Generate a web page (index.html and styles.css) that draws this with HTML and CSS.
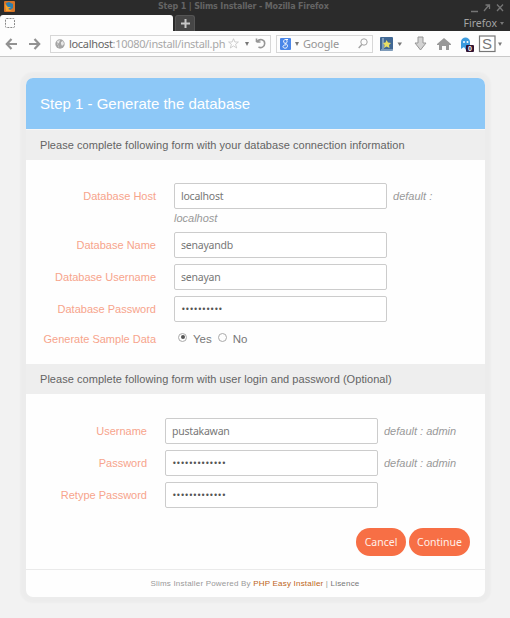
FILE: index.html
```html
<!DOCTYPE html>
<html lang="en">
<head>
<meta charset="utf-8">
<title>Step 1 | Slims Installer</title>
<link rel="stylesheet" href="styles.css">
</head>
<body>
<header class="browser">
  <div class="titlebar">
    <svg class="fox" width="11" height="11" viewBox="0 0 11 11"><rect width="11" height="11" rx="1" fill="#d87528"/><path d="M2 2L5 1L9 3V7L6 9L3 7Z" fill="#2d7fae"/><path d="M1 3L4 6L7 6L4 8L8 10H2Z" fill="#f7a52c"/></svg>
    <span class="window-title">Step 1 | Slims Installer - Mozilla Firefox</span>
    <svg class="controls" width="35" height="10" viewBox="0 0 35 10" fill="none" stroke="#757575" stroke-width="1.3"><path d="M1 8.500H8M14 8L19 2M15.500 2H19.500V6M27 1.500L33 8M33 1.500L27 8"/></svg>
  </div>
  <div class="tabs">
    <div class="tab"><svg width="10" height="10" viewBox="0 0 10 10"><rect x=".5" y=".5" width="9" height="9" rx="1" fill="none" stroke="#888" stroke-dasharray="2 1"/></svg></div>
    <div class="new-tab"><svg width="9" height="9" viewBox="0 0 9 9"><path d="M4.500 0V9M0 4.500H9" stroke="#c8c8c8" stroke-width="2"/></svg></div>
    <span class="menu">Firefox<i class="caret"></i></span>
  </div>
  <div class="toolbar">
    <svg class="arrows" width="36" height="12" viewBox="0 0 36 12" fill="none" stroke="#929292" stroke-width="2.200"><path d="M12 6H2M6.500 1L1.800 6L6.500 11M24 6H34M29.500 1L34.200 6L29.500 11"/></svg>
    <div class="address">
      <svg width="10" height="10" viewBox="0 0 10 10"><circle cx="5" cy="5" r="4.700" fill="#a5a5a5"/><path d="M2 2L5 1L4 4L2 5L4 7L4 9M6 3L8 2L9 5L7 7L6 5Z" fill="#e8e8e8"/></svg>
      <span class="url"><b>localhost</b>:10080/install/install.ph</span>
      <svg class="star" width="11" height="11" viewBox="0 0 11 11"><path d="M5.500 .7L6.900 4H10.400L7.600 6.300L8.700 10L5.500 7.900L2.300 10L3.400 6.300L.6 4H4.100Z" fill="none" stroke="#c4c4c4" stroke-width=".8"/></svg>
      <i class="caret"></i>
      <svg class="reload" width="11" height="11" viewBox="0 0 11 11" fill="none" stroke="#969696" stroke-width="1.600"><path d="M1.500 4H5.500M1.500 4V.5M2 3.700C5 0 9.700 1.800 9.700 5.500C9.700 9 6 10.500 3.500 9"/></svg>
    </div>
    <div class="search">
      <svg width="11" height="12" viewBox="0 0 11 12"><rect width="11" height="12" rx="1" fill="#4a86e8"/><path d="M8 1.500H5.500C3 1.500 3 5.300 5.300 5.300C7.800 5.300 7.500 1.500 5.500 1.500M5.300 5.300C7.800 6 8.500 9.800 5.300 10.200C2 10.200 2.200 6.800 6 6.800" fill="none" stroke="#fff"/></svg>
      <i class="caret"></i><span>Google</span>
      <svg width="10" height="11" viewBox="0 0 10 11" fill="none" stroke="#a2a2a2"><circle cx="6" cy="4" r="3.200"/><path d="M3.800 6.500L.7 10" stroke-width="1.400"/></svg>
    </div>
    <svg class="tools" width="125" height="18" viewBox="0 0 125 18">
      <rect x="1" y="2" width="13" height="14" rx="1" fill="#416894"/><path d="M2 15H14M4 3V14" stroke="#bdd0df"/><path d="M7.500 5L9 7.500L12 8L10 10L10.500 13L7.500 11.500L5 13L5.500 10L4 8L6.500 7.500Z" fill="#eadf65"/>
      <path d="M18.500 7.500H23L20.700 11Z" fill="#777"/>
      <path d="M39 2H44V8H47L41.500 15L36 8H39Z" fill="#d3d3d3" stroke="#969696"/>
      <path d="M58 9L65 3L72 9V10H70V15H67V11H63V15H60V10H58Z" fill="#999"/>
      <path d="M82 14V7C82 1 91 1 91 7V14L89 12L87 15L85 12Z" fill="#3c9cdf"/><circle cx="85" cy="7" r="1" fill="#fff"/><circle cx="88.500" cy="7" r="1" fill="#fff"/><rect x="87" y="10" width="8" height="7" rx="1" fill="#321331"/><text x="89" y="16" class="badge-text">0</text>
      <rect x="100.500" y="1" width="15.500" height="15.500" fill="#fff" stroke="#777" stroke-width="1.200"/><text x="103" y="14" class="s-mark">S</text><path d="M119 7.500H123L121 11Z" fill="#777"/>
    </svg>
  </div>
</header>
<main class="card">
  <h1>Step 1 - Generate the database</h1>
  <h2 class="first">Please complete following form with your database connection information</h2>
  <section class="database">
    <div class="row host"><label for="host">Database Host</label><div class="value"><input id="host" value="localhost"> <em>default : localhost</em></div></div>
    <div class="row"><label for="name">Database Name</label><input id="name" value="senayandb"></div>
    <div class="row"><label for="dbuser">Database Username</label><input id="dbuser" value="senayan"></div>
    <div class="row"><label for="dbpass">Database Password</label><input id="dbpass" class="secret" type="password" value="aaaaaaaaaa"></div>
    <div class="row radios"><label>Generate Sample Data</label><div class="options"><i class="radio checked"></i><span>Yes</span><i class="radio"></i><span>No</span></div></div>
  </section>
  <h2 class="second">Please complete following form with user login and password (Optional)</h2>
  <section class="login">
    <div class="row"><label for="user">Username</label><input id="user" value="pustakawan"><em>default : admin</em></div>
    <div class="row"><label for="pass">Password</label><input id="pass" class="secret" type="password" value="aaaaaaaaaaaaa"><em>default : admin</em></div>
    <div class="row"><label for="retype">Retype Password</label><input id="retype" class="secret" type="password" value="aaaaaaaaaaaaa"></div>
  </section>
  <div class="actions"><button class="cancel">Cancel</button><button class="continue">Continue</button></div>
  <footer><span>Slims Installer Powered By <a class="php">PHP Easy Installer</a> | <a class="license">Lisence</a></span></footer>
</main>
</body>
</html>
```
FILE: styles.css
```css
* { box-sizing: border-box; }
body { margin: 0; height: 618px; overflow: hidden; background: #f2f2f2; font-family: "Liberation Sans", sans-serif; font-size: 11px; color: #666; }
svg { display: block; flex: none; }
.browser { height: 57px; background: #2b2b2b; font-family: "Noto Sans", sans-serif; }
.titlebar { height: 15px; display: flex; align-items: center; padding: 0 5px 0 4px; }
.fox { margin-top: -2px; }
.window-title { margin-left: 143px; margin-top: -2px; font: bold 8px "DejaVu Sans", sans-serif; letter-spacing: -.16px; color: #646464; white-space: nowrap; }
.controls { margin-left: auto; }
.tabs { height: 16px; display: flex; }
.tab { width: 173px; background: #fdfdfd; border-radius: 3px 3px 0 0; padding: 3px 0 0 5px; }
.new-tab { width: 20px; margin-left: 2px; background: #464646; border: 1px solid #555; border-bottom: 0; border-radius: 3px 3px 0 0; display: flex; align-items: center; justify-content: center; }
.menu { margin-left: auto; margin-right: 6px; display: flex; align-items: center; gap: 3px; font-size: 10.500px; color: #a4a4a4; }
.menu .caret { border-width: 3px 2px 0; }
.caret { display: block; flex: none; border: solid transparent; border-width: 4px 2.500px 0; border-top-color: #777; }
.toolbar { height: 26px; background: #fdfdfd; border-bottom: 1px solid #c9c9c9; display: flex; align-items: center; }
.arrows { margin-left: 5px; }
.address { width: 221px; height: 18px; margin-left: 9px; padding: 0 4px; border: 1px solid #d7d7d7; display: flex; align-items: center; white-space: nowrap; }
.url { flex: none; margin-left: 4px; width: 156px; font-size: 11px; letter-spacing: -.32px; color: #a8a8a8; }
.url b { color: #666; font-weight: normal; }
.star { margin-left: 3px; margin-right: 6px; }
.reload { margin-left: auto; }
.search { width: 97px; height: 18px; margin-left: 5px; padding: 0 4px 0 3px; border: 1px solid #d7d7d7; display: flex; align-items: center; gap: 4px; color: #969696; }
.search svg:last-child { margin-left: auto; }
.search span { letter-spacing: -.2px; }
.tools { margin-left: 6px; }
.badge-text { font: bold 7px "Liberation Sans", sans-serif; fill: #fff; }
.s-mark { font: 15px "Liberation Sans", sans-serif; fill: #777; }
.card { width: 459px; height: 519px; margin: 21px 0 0 25.500px; background: #fefefe; border-radius: 7px; box-shadow: 0 0 2px 6px rgba(0,0,0,.025); }
h1 { height: 51px; margin: 0; padding-left: 14.500px; background: #8dc8f7; border-radius: 7px 7px 0 0; font-size: 15px; font-weight: normal; line-height: 51px; color: #fff; }
h2 { height: 30px; margin: 0; padding-left: 14.500px; background: #eee; font-size: 11px; letter-spacing: .045px; line-height: 30px; font-weight: normal; color: #646464; white-space: nowrap; }
.first { height: 31px; border-top: 1px solid #f7f7f7; }
.database { height: 204px; padding: 23px 14px 0 17px; }
.login { height: 134px; padding: 21px 14px 0 8px; }
.row { display: flex; align-items: center; height: 32px; }
label { width: 113.500px; text-align: right; margin-right: 18px; color: #f7a48c; white-space: nowrap; }
input { width: 213px; height: 26px; padding: 0 6px; border: 1px solid #ccc; border-radius: 2px; background: #fff; font: 10.500px "Noto Sans", sans-serif; letter-spacing: -.22px; color: #777; outline: 0; }
input.secret { font: 8px "DejaVu Sans", sans-serif; letter-spacing: -.6px; color: #555; }
em { color: #999; margin-left: 6px; white-space: nowrap; }
.row.host { height: 46px; align-items: flex-start; }
.host label { line-height: 26px; }
.value { width: 270px; line-height: 18px; }
.value em { margin-left: 3px; white-space: normal; }
.radios { height: 27px; }
.options { display: flex; align-items: center; font-size: 11.500px; color: #777; padding-left: 4px; }
.radio { width: 9px; height: 9px; border: 1px solid #aaa; border-radius: 50%; margin-top: -3px; display: grid; place-items: center; }
.checked::after { content: ""; width: 4px; height: 4px; border-radius: 50%; background: #555; }
.options span { margin: 0 6px; }
.actions { height: 41px; display: flex; justify-content: flex-end; gap: 3px; padding-right: 14.500px; }
button { height: 28px; border: 0; padding: 0 0 1px; border-radius: 14px; background: #f76f45; color: #fff0e9; font: 10.500px "Noto Sans", sans-serif; }
.cancel { width: 50px; }
.continue { width: 61px; }
footer { height: 28px; border-top: 1px solid #eaeaea; text-align: center; line-height: 27px; font-size: 8px; letter-spacing: .2px; color: #999; }
.php { color: #bd6519; }
.license { color: #777; }
```
